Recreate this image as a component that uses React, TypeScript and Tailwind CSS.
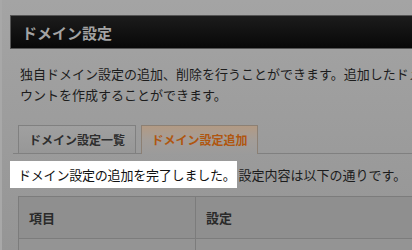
export default function App() {
  return (
    <div
      className="relative h-[250px] w-[412px] overflow-hidden border-l-2 border-[#a8a8a8] bg-gradient-to-b from-[#a4a4a4] to-[#959595] text-[#1c1c1c]"
      style={{ fontFamily: '"Noto Sans CJK JP", "Liberation Sans", sans-serif' }}
    >
      <div className="w-[700px] pl-2 pt-[15px]">
        {/* Title bar */}
        <div className="flex h-[34px] items-center border border-[#555] bg-gradient-to-b from-[#1c1c1c] to-[#080808] pl-[11px]">
          <h1 className="text-[15px] font-bold leading-none text-[#a3a3a3]">ドメイン設定</h1>
        </div>

        {/* Description */}
        <p className="mt-[14px] pl-[10px] text-[13px] leading-[21px] whitespace-nowrap">
          独自ドメイン設定の追加、削除を行うことができます。追加したドメインでメールアカ
          <br />
          ウントを作成することができます。
        </p>

        {/* Tabs */}
        <div className="mt-[20px] ml-[3px] flex items-end gap-[5px] border-b border-[#808080] pl-[5px]">
          <div className="flex h-[28px] w-[118px] items-center justify-center border border-b-0 border-[#808080] bg-gradient-to-b from-[#a0a0a0] to-[#979797] text-[12px] font-bold text-[#2e2e2e]">
            ドメイン設定一覧
          </div>
          <div className="-mb-px flex h-[29px] w-[117px] items-center justify-center border border-b-0 border-[#8c8074] bg-gradient-to-b from-[#b29a84] via-[#a39d98] to-[#9b9b9b] text-[12px] font-bold text-[#b0560f]">
            ドメイン設定追加
          </div>
        </div>

        {/* Result message */}
        <p className="mt-[7px] flex items-center text-[13px] whitespace-nowrap">
          <span className="flex h-[27px] items-center bg-white pl-[8px] pr-[1px] tracking-[-0.2px] text-[#111]">
            ドメイン設定の追加を完了しました。
          </span>
          <span className="ml-[2px]">設定内容は以下の通りです。</span>
        </p>

        {/* Table */}
        <table className="mt-[8px] ml-[8px] w-[600px] border-collapse text-[13px]">
          <thead>
            <tr className="h-[42px] bg-[#8f8f8f]">
              <th className="w-[177px] border border-[#7c7c7c] pl-[10px] text-left font-bold text-[#2a2a2a]">項目</th>
              <th className="border border-[#7c7c7c] pl-[10px] text-left font-bold text-[#2a2a2a]">設定</th>
            </tr>
          </thead>
          <tbody>
            <tr className="h-[40px] bg-[#949494]">
              <td className="border border-[#7c7c7c]"></td>
              <td className="border border-[#7c7c7c]"></td>
            </tr>
          </tbody>
        </table>
      </div>
    </div>
  );
}
